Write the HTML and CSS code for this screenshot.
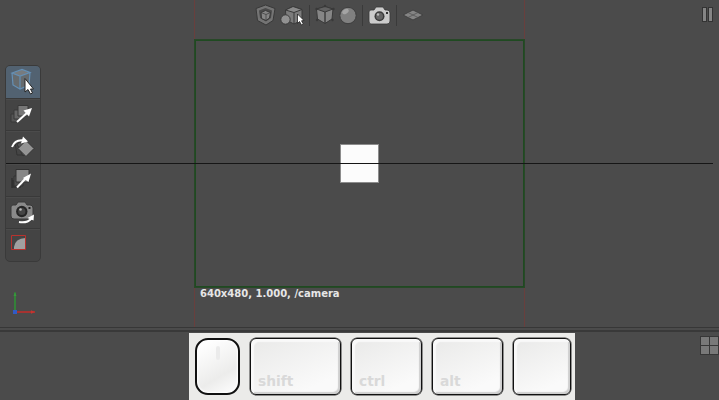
FILE: index.html
```html
<!DOCTYPE html>
<html lang="en">
<head>
<meta charset="utf-8">
<title>Camera viewport</title>
<link rel="stylesheet" href="styles.css">
</head>
<body>
<main class="app">
  <section class="viewport">
    <div class="camera-gate">
      <div class="camera-frame"><div class="cube"></div></div>
      <div class="camera-label">640x480, 1.000, /camera</div>
    </div>

    <nav class="display-bar">
      <svg class="display-icons" width="172" height="30" viewBox="0 0 172 30">
        <g stroke="#393939" stroke-width="1" stroke-linejoin="round">
          <path d="M6 8.500 15.500 5 25 8.500 23 20.500 16 25 7.500 20.500Z" fill="#747474"/>
          <path d="M9 10.500 15.500 8 22 10.500 21 18 16 21.500 10 18Z" fill="#4a4a4a" stroke="none"/>
          <path d="M11 12.500 15.500 10.500 20.500 12.500 19.500 18 16 20.500 11.500 18.500Z" fill="#858585"/>
          <path d="M11 12.500 16 14.500 20.500 12.500M16 14.500V20.500" fill="none" stroke-width=".7"/>
          <path d="M35.500 10 43 6.500 52 9.500V20L44 24 36 20Z" fill="#7c7c7c"/>
          <path d="M35.500 10 43 6.500 52 9.500 44 12.500Z" fill="#8b8b8b"/>
          <path d="M44 12.500V24" fill="none"/>
          <circle cx="35.500" cy="19.500" r="4.700" fill="#919191"/>
          <path d="M66.500 9 75 6.500 83 9 82 19 75 23.500 67.500 19Z" fill="#868686"/>
          <path d="M66.500 9 75 6.500 83 9 75 12Z" fill="#626262"/>
          <path d="M75 12V23.500" stroke-width="1.400"/>
        </g>
        <g fill="#393939"><circle cx="66.500" cy="9" r="1.200"/><circle cx="75" cy="6" r="1.200"/><circle cx="83.500" cy="9" r="1.200"/><circle cx="67" cy="20" r="1.200"/><circle cx="82.500" cy="20" r="1.200"/></g>
        <path d="M47.500 14V23.500L49.500 21.500 51.500 25 53.300 24 51.500 20.800 54 20.500Z" fill="#fff" stroke="#222" stroke-width=".8"/>
        <circle cx="98" cy="15.500" r="8.200" fill="#808080" stroke="#3d3d3d"/>
        <ellipse cx="95.500" cy="11.500" rx="3.500" ry="2.200" fill="#a4a4a4" transform="rotate(-30 95.500 11.500)"/>
        <path d="M59.500 5V26M112.500 5V26M146.500 5V26" stroke="#3a3a3a"/>
        <path d="M121 10H124L126 7H133L135 10H137Q140 10 140 13V21Q140 24 137 24H121Q119 24 119 21V12Q119 10 121 10Z" fill="#ccc" stroke="#393939" stroke-width=".8"/>
        <circle cx="129.500" cy="16.200" r="5" fill="#3b3b3b"/>
        <circle cx="129.500" cy="16.200" r="3.500" fill="#666"/>
        <circle cx="128" cy="14.500" r="1.200" fill="#bbb"/>
        <rect x="136" y="12" width="2" height="2" fill="#333"/>
        <path d="M153 15 163 10 173 15 163 20Z" fill="#848484" stroke="#414141"/>
        <path d="M158 12.500 168 17.500M168 12.500 158 17.500" stroke="#555" stroke-width=".8"/>
      </svg>
    </nav>

    <nav class="tools">
      <div class="tool active">
        <svg viewBox="0 0 36 33"><path d="M7 8 17 4.500 25 7.500 24 20 15 24 8 20Z" fill="#666b6e"/><path d="M7 8 15 11 25 7.500 17 4.500Z" fill="#777b7e"/><path d="M7 8 17 4.500 25 7.500 15 11ZM7 8 8 20 15 24 24 20 25 7.500M15 11V24" fill="none" stroke="#648fb4" stroke-width="1.200"/><path d="M20 13.500V27L23 24.500 25.500 29 27.500 28 25.500 24H28.500Z" fill="#fff" stroke="#262626"/></svg>
      </div>
      <div class="tool">
        <svg viewBox="0 0 36 33"><g stroke="#383838"><path d="M6 16H14V24H6Z" fill="#555"/><path d="M9 12H18V21H9Z" fill="#666"/><path d="M13 7.500H23V18H13Z" fill="#777"/></g><path d="M12 24 23 14" stroke="#fff" stroke-width="2"/><path d="M27 10 18.500 12.500 24 18.500Z" fill="#fff"/></svg>
      </div>
      <div class="tool">
        <svg viewBox="0 0 36 33"><g stroke="#333"><path d="M10 12H20V25H12Z" fill="#454545"/><path d="M12 14 19 10 27 19 18 26Z" fill="#555"/><path d="M21 10.500 29 18.500 21 26.500 13 18.500Z" fill="#949494"/></g><path d="M7 17C9 12 13 9.500 19 10.500" fill="none" stroke="#fff" stroke-width="2"/><path d="M18 6.500 23 11.500 16 13.500Z" fill="#fff"/></svg>
      </div>
      <div class="tool">
        <svg viewBox="0 0 36 33"><path d="M8 17V24H16M7 15V25" fill="none" stroke="#303030" stroke-width="1.500"/><path d="M9 13H18V23H9Z" fill="#4e4e4e" stroke="#333"/><path d="M11 6.500H24V19H11Z" fill="#878787" stroke="#333"/><path d="M12 24.500 22 14" stroke="#fff" stroke-width="2"/><path d="M26 10.500 18 15 23.500 19Z" fill="#fff"/></svg>
      </div>
      <div class="tool">
        <svg viewBox="0 0 36 33"><path d="M8 9 11 9 13 6H20L22 9H25Q28 9 28 12V20Q28 23 25 23H9Q6 23 6 20V11Q6 9 8 9Z" fill="#8a8a8a" stroke="#393939"/><circle cx="16.800" cy="15.500" r="5.700" fill="#252525"/><circle cx="16.800" cy="15.500" r="3.600" fill="#454545"/><circle cx="15.500" cy="13.500" r="1.300" fill="#bbb"/><rect x="23.500" y="11" width="2" height="2" fill="#222"/><path d="M14 26Q22 27.500 26.500 22.500" fill="none" stroke="#fff" stroke-width="2"/><path d="M29 18.500 22.500 22 28.500 24.500Z" fill="#fff"/></svg>
      </div>
      <div class="tool">
        <svg viewBox="0 0 36 33"><path d="M9 21V19Q10 10.500 20.500 10V21Z" fill="#a0a0a0"/><path d="M6.500 7.500H20.500V21.500H6.500Z" fill="none" stroke="#b8322e"/></svg>
      </div>
    </nav>
    <div class="horizon"></div>

    <div class="pause"><i></i><i></i></div>
    <svg class="axes" width="26" height="28" viewBox="0 0 26 28"><path d="M5 20V1.500" stroke="#2f8f35" stroke-width="1.600"/><path d="M5 1 3.500 5H6.500Z" fill="#38983c"/><path d="M5 21H25" stroke="#bd2e2b" stroke-width="1.600"/><path d="M25 21 21 19.200V22.800Z" fill="#c43530"/><rect x="3" y="19" width="4" height="4" fill="#315bc4"/></svg>
  </section>
  <div class="splitter"></div>
  <footer class="lower">
    <div class="keys">
      <div class="key mouse"><i class="wheel"></i></div>
      <div class="key shift">shift</div>
      <div class="key">ctrl</div>
      <div class="key alt">alt</div>
      <div class="key blank"></div>
    </div>
    <div class="layout-grid"><i></i><i></i><i></i><i></i></div>
  </footer>
</main>
</body>
</html>
```
FILE: styles.css
```css
* { box-sizing: border-box; }
body { margin: 0; background: #4b4b4b; font-family: "DejaVu Sans", sans-serif; }
.app { width: 719px; height: 400px; display: flex; flex-direction: column; overflow: hidden; }
.viewport { position: relative; height: 327px; flex: none; display: flex; justify-content: center; }
.camera-gate { width: 331px; height: 327px; padding-top: 39px; border: solid #693f3d; border-width: 0 1px; }
.camera-frame { height: 249px; margin: 0 -1px; border: 1px solid #284828; outline: 1px solid #1f4a21; outline-offset: -2px; display: flex; justify-content: center; padding: 104px 1px 0 0; }
.cube { width: 39px; height: 39px; background: #fcfcfc; border: 1px solid #8c8c8c; }
.camera-label { margin: -1px 0 0 5px; font-size: 10px; line-height: 14px; font-weight: bold; color: #e6e6e6; white-space: nowrap; }
.horizon { position: absolute; left: 6px; right: 6px; top: 163px; height: 1px; background: #161616; }
.display-bar { position: absolute; left: 250px; top: 0; }
.display-icons { display: block; overflow: visible; }
.tools { position: absolute; left: 5px; top: 65px; width: 36px; height: 197px; display: flex; flex-direction: column; border: 1px solid #3a3a3a; border-radius: 5px; background: #444; overflow: hidden; }
.tool { flex: 1; min-height: 0; border-bottom: 1px solid #393939; box-shadow: inset 0 1px #4b4b4b; }
.tool:last-child { border-bottom: 0; }
.tool svg { display: block; width: 36px; height: 33px; margin: -1px; }
.tool.active { background: #526271; box-shadow: none; }
.pause { position: absolute; right: 6px; top: 7px; display: flex; gap: 1px; }
.pause i { width: 5px; height: 15px; background: #858585; border: 1px solid #333; }
.axes { position: absolute; left: 10px; top: 291px; }
.splitter { height: 6px; flex: none; border-top: 1px solid #373737; background: linear-gradient(#4b4b4b 2px, #393939 2px 4px, #4b4b4b 4px); }
.lower { height: 67px; display: flex; justify-content: space-between; padding-left: 189px; }
.keys { width: 386px; height: 67px; padding: 5px 4px 0 6px; display: flex; gap: 9px; background: #ebebe9; }
.key { width: 71px; height: 57px; flex: none; padding: 0 0 4px 7px; border: 1.500px solid #111; border-radius: 6px; display: flex; align-items: flex-end; background: linear-gradient(155deg, #e9e9e8, #fafafa 80%); box-shadow: 0 0 0 .5px #333, inset 3px 3px 1px #f9f9f9, inset -2px -2px 1px #cfcfcf; color: #d9d9d9; font-size: 13.800px; line-height: 17px; font-weight: bold; }
.key.shift { width: 91px; margin-right: 1px; }
.key.alt { margin: 0 1px; }
.key.blank { width: 58px; }
.key.mouse { width: 45px; margin-right: 1px; padding: 6px 0 0; border-width: 2px; border-radius: 13px; justify-content: center; align-items: flex-start; background: linear-gradient(150deg, #fff 10%, #ececeb 65%, #fff); box-shadow: inset 0 0 2px 1px #fff; }
.wheel { width: 4px; height: 14px; border-radius: 2px; background: #ebebeb; }
.layout-grid { width: 19px; height: 19px; margin-top: 3px; padding: 1px; display: grid; grid-template-columns: 8px 8px; grid-template-rows: 8px 8px; gap: 1px; background: #373737; }
.layout-grid i { background: #797979; }
```
